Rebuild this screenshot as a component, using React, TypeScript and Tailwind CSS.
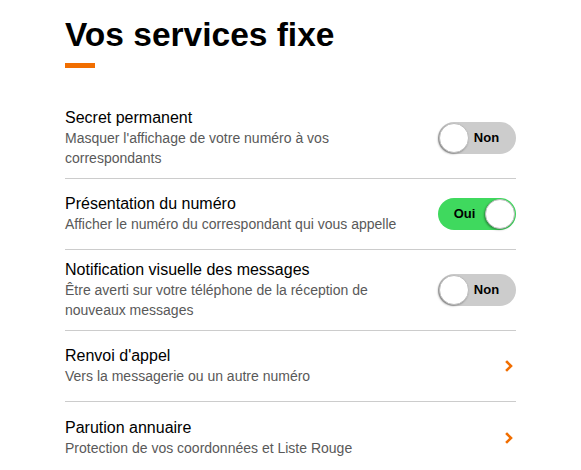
import React, { useState } from "react";

interface Service {
  id: string;
  title: string;
  subtitle: string;
  kind: "toggle" | "link";
  on?: boolean;
}

const services: Service[] = [
  { id: "secret", title: "Secret permanent", subtitle: "Masquer l'affichage de votre numéro à vos correspondants", kind: "toggle", on: false },
  { id: "presentation", title: "Présentation du numéro", subtitle: "Afficher le numéro du correspondant qui vous appelle", kind: "toggle", on: true },
  { id: "notification", title: "Notification visuelle des messages", subtitle: "Être averti sur votre téléphone de la réception de nouveaux messages", kind: "toggle", on: false },
  { id: "renvoi", title: "Renvoi d'appel", subtitle: "Vers la messagerie ou un autre numéro", kind: "link" },
  { id: "parution", title: "Parution annuaire", subtitle: "Protection de vos coordonnées et Liste Rouge", kind: "link" },
];

const Toggle: React.FC<{ on: boolean; onChange: () => void }> = ({ on, onChange }) => (
  <button
    onClick={onChange}
    className={`flex h-[32px] w-[78px] shrink-0 items-center rounded-full p-px ${on ? "flex-row-reverse bg-[#3fd95e] pl-[6px]" : "bg-[#cccccc] pr-[12px]"}`}
  >
    <span className="h-[30px] w-[30px] shrink-0 rounded-full border border-[#bdbdbd] bg-white shadow-[-1px_1px_2px_rgba(0,0,0,0.35)]" />
    <span className="flex-1 text-center text-[13px] font-bold text-black">{on ? "Oui" : "Non"}</span>
  </button>
);

const Chevron = () => (
  <svg width="10" height="12" viewBox="0 0 10 12" className="mr-[2px] shrink-0">
    <polyline points="3,2 7,6 3,10" fill="none" stroke="#f16e00" strokeWidth="2.6" strokeLinecap="square" strokeLinejoin="miter" />
  </svg>
);

const App: React.FC = () => {
  const [state, setState] = useState<Record<string, boolean>>(
    Object.fromEntries(services.filter(s => s.kind === "toggle").map(s => [s.id, !!s.on]))
  );

  return (
    <div className="min-h-screen bg-white font-['Liberation_Sans',Arial,sans-serif]">
      <div className="mx-auto w-[451px] pt-[15px]">
        <h1 className="text-[33.5px] font-bold leading-[40px] text-black">Vos services fixe</h1>
        <div className="mt-2 h-[5px] w-[30px] bg-[#f16e00]" />

        <ul className="mt-[30px]">
          {services.map((s, i) => (
            <li
              key={s.id}
              className={`flex min-h-[71px] items-center justify-between gap-4 py-[10px] ${i < services.length - 1 ? "border-b border-[#cccccc]" : ""}`}
            >
              <div className="max-w-[340px]">
                <div className="text-[16px] leading-5 text-black">{s.title}</div>
                <div className="text-[14px] leading-5 text-[#595959]">{s.subtitle}</div>
              </div>
              {s.kind === "toggle" ? (
                <Toggle on={state[s.id]} onChange={() => setState(p => ({ ...p, [s.id]: !p[s.id] }))} />
              ) : (
                <Chevron />
              )}
            </li>
          ))}
        </ul>
      </div>
    </div>
  );
};

export default App;
